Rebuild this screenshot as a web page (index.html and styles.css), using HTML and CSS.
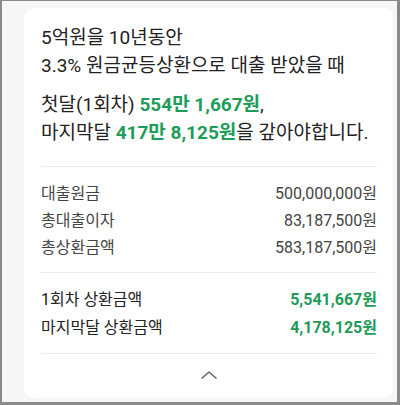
FILE: index.html
```html
<!DOCTYPE html>
<html lang="ko">
<head>
<meta charset="utf-8">
<link rel="stylesheet" href="styles.css">
</head>
<body>
<div class="frame">
  <div class="card">
    <div class="summary">
      <p class="line">5억원을 10년동안</p>
      <p class="line">3.3% 원금균등상환으로 대출 받았을 때</p>
      <p class="line gap">첫달(1회차) <b class="green">554만 1,667원</b>,</p>
      <p class="line">마지막달 <b class="green">417만 8,125원</b>을 갚아야합니다.</p>
    </div>
    <div class="section">
      <div class="row"><span class="label">대출원금</span><span class="value">500,000,000원</span></div>
      <div class="row"><span class="label">총대출이자</span><span class="value">83,187,500원</span></div>
      <div class="row"><span class="label">총상환금액</span><span class="value">583,187,500원</span></div>
    </div>
    <div class="section strong">
      <div class="row"><span class="label">1회차 상환금액</span><span class="value green">5,541,667원</span></div>
      <div class="row"><span class="label">마지막달 상환금액</span><span class="value green">4,178,125원</span></div>
    </div>
    <div class="toggle">
      <svg width="18" height="10" viewBox="0 0 18 10"><polyline points="1.5,8.5 9,2 16.5,8.5" fill="none" stroke="#555" stroke-width="1.3"/></svg>
    </div>
  </div>
</div>
</body>
</html>
```
FILE: styles.css
```css
html, body { margin: 0; padding: 0; }
body {
  font-family: Roboto, "Noto Sans CJK KR", sans-serif;
  color: #222;
}
.frame {
  box-sizing: border-box;
  width: 400px;
  height: 405px;
  border: solid #8a8a8a;
  border-width: 1px 3px 3px 2px;
  background: #f6f6f6;
  padding: 7px 4px 0 22px;
  overflow: hidden;
}
.card {
  background: #fff;
  border-radius: 10px;
  height: 390px;
  box-sizing: border-box;
  padding: 16px 16px 0 17px;
}
.summary {
  padding-bottom: 19px;
  border-bottom: 1px solid #ececec;
}
.line {
  margin: 0;
  font-size: 19px;
  line-height: 28px;
  color: #222;
}
.line.gap { margin-top: 11px; }
.green { color: #1e9c5a; font-weight: 700; }
.section {
  padding: 13px 0 11px;
  border-bottom: 1px solid #ececec;
}
.row {
  display: flex;
  justify-content: space-between;
  font-size: 16px;
  line-height: 27px;
  color: #444;
}
.section.strong { padding: 13px 0 11px; }
.section.strong .row { line-height: 28px; color: #222; }
.toggle {
  display: flex;
  justify-content: center;
  padding-top: 16px;
}
.toggle svg { display: block; }
```
